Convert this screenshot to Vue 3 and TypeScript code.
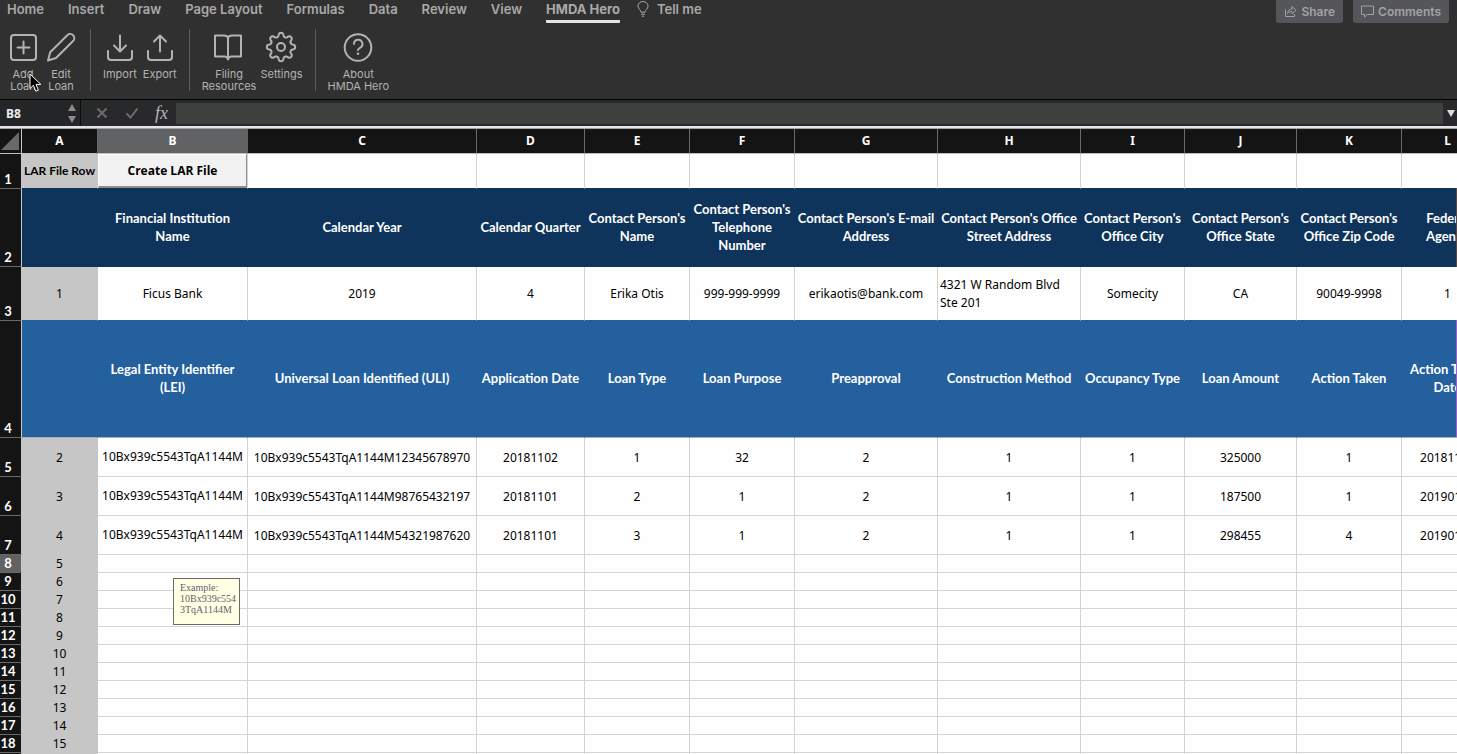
<script setup lang="ts">
interface Column {
  letter: string
  width: number
}

interface SheetRow {
  n: number
  kind: 'top' | 'navy' | 'contact' | 'blue' | 'loan' | 'empty'
  cells: string[]
}

const tabs: string[] = ['Home', 'Insert', 'Draw', 'Page Layout', 'Formulas', 'Data', 'Review', 'View', 'HMDA Hero']
const activeTab = 'HMDA Hero'

const columns: Column[] = [
  { letter: 'A', width: 76 },
  { letter: 'B', width: 150 },
  { letter: 'C', width: 229 },
  { letter: 'D', width: 108 },
  { letter: 'E', width: 105 },
  { letter: 'F', width: 105 },
  { letter: 'G', width: 143 },
  { letter: 'H', width: 143 },
  { letter: 'I', width: 104 },
  { letter: 'J', width: 112 },
  { letter: 'K', width: 105 },
  { letter: 'L', width: 92 },
]

const blanks = (count: number): string[] => Array.from({ length: count }, () => '')

// Eight rounded teeth around the centre of a 32-unit box.
const gearPoints: string = Array.from({ length: 144 }, (_, i) => {
  const angle = (i / 144) * Math.PI * 2
  const wave = Math.cos(angle * 8)
  const radius = 12.3 + 2 * Math.tanh(wave * 1.6)
  return `${(16 + radius * Math.sin(angle)).toFixed(2)},${(16 - radius * Math.cos(angle)).toFixed(2)}`
}).join(' ')

const rows: SheetRow[] = [
  { n: 1, kind: 'top', cells: ['LAR File Row', ...blanks(11)] },
  {
    n: 2,
    kind: 'navy',
    cells: [
      '',
      'Financial Institution\nName',
      'Calendar Year',
      'Calendar Quarter',
      "Contact Person's\nName",
      "Contact Person's\nTelephone\nNumber",
      "Contact Person's E-mail\nAddress",
      "Contact Person's Office\nStreet Address",
      "Contact Person's\nOffice City",
      "Contact Person's\nOffice State",
      "Contact Person's\nOffice Zip Code",
      'Federal\nAgency',
    ],
  },
  {
    n: 3,
    kind: 'contact',
    cells: ['1', 'Ficus Bank', '2019', '4', 'Erika Otis', '999-999-9999', 'erikaotis@bank.com', '4321 W Random Blvd\nSte 201', 'Somecity', 'CA', '90049-9998', '1'],
  },
  {
    n: 4,
    kind: 'blue',
    cells: [
      '',
      'Legal Entity Identifier\n(LEI)',
      'Universal Loan Identified (ULI)',
      'Application Date',
      'Loan Type',
      'Loan Purpose',
      'Preapproval',
      'Construction Method',
      'Occupancy Type',
      'Loan Amount',
      'Action Taken',
      'Action Taken\nDate',
    ],
  },
  { n: 5, kind: 'loan', cells: ['2', '10Bx939c5543TqA1144M', '10Bx939c5543TqA1144M12345678970', '20181102', '1', '32', '2', '1', '1', '325000', '1', '20181120'] },
  { n: 6, kind: 'loan', cells: ['3', '10Bx939c5543TqA1144M', '10Bx939c5543TqA1144M98765432197', '20181101', '2', '1', '2', '1', '1', '187500', '1', '20190110'] },
  { n: 7, kind: 'loan', cells: ['4', '10Bx939c5543TqA1144M', '10Bx939c5543TqA1144M54321987620', '20181101', '3', '1', '2', '1', '1', '298455', '4', '20190110'] },
  ...Array.from({ length: 12 }, (_, i): SheetRow => ({ n: i + 8, kind: 'empty', cells: [String(i + 5), ...blanks(11)] })),
]
</script>

<template>
  <div class="app">
    <header class="ribbon">
      <nav class="tabs">
        <button v-for="t in tabs" :key="t" type="button" class="tab" :class="{ active: t === activeTab }">{{ t }}</button>
        <button type="button" class="tab tell">
          <svg width="12" height="16" viewBox="0 0 12 16" fill="none" stroke="currentColor">
            <path d="M4 11.2C4 9 1 8 1 5.2a5 4.7 0 0 1 10 0C11 8 8 9 8 11.2z" />
            <path d="M4 13.2h4M4.8 15.2h2.4" />
          </svg>
          Tell me
        </button>
        <div class="actions">
          <button type="button" class="action">
            <svg width="13" height="13" viewBox="0 0 13 13" fill="none" stroke="currentColor">
              <path d="M1.500 4.500v7h9V9" />
              <path d="M3.500 8.500C4 5.500 5.500 4 8 4V1.500l4 3.700L8 9V6.500C6 6.500 4.800 7 3.500 8.500z" />
            </svg>
            Share
          </button>
          <button type="button" class="action">
            <svg width="13" height="13" viewBox="0 0 13 13" fill="none" stroke="currentColor">
              <path d="M.5 1h12v8.500H6.200L3.500 12V9.500h-3z" />
            </svg>
            Comments
          </button>
        </div>
      </nav>

      <div class="tools">
        <div class="group first">
          <button type="button" class="tool">
            <svg width="32" height="32" viewBox="0 0 32 32">
              <rect x="4" y="4" width="25" height="25" rx="3" />
              <path d="M16.500 10.500v12M10.500 16.500h12" />
            </svg>
            <span>Add<br />Loan</span>
          </button>
          <button type="button" class="tool">
            <svg width="32" height="32" viewBox="0 0 32 32">
              <path d="M3 29.500l2.200-8.300L22.300 4.200a4 4 0 0 1 5.800 5.800L11 27z" />
            </svg>
            <span>Edit<br />Loan</span>
          </button>
        </div>
        <div class="group transfer">
          <button type="button" class="tool">
            <svg width="32" height="32" viewBox="0 0 32 32">
              <path d="M4 20v6a3 3 0 0 0 3 3h18a3 3 0 0 0 3-3v-6M16 4.500v16M10 14.500l6 6 6-6" />
            </svg>
            <span>Import</span>
          </button>
          <button type="button" class="tool">
            <svg width="32" height="32" viewBox="0 0 32 32">
              <path d="M4 20v6a3 3 0 0 0 3 3h18a3 3 0 0 0 3-3v-6M16 20.500V4.500M10 10.500l6-6 6 6" />
            </svg>
            <span>Export</span>
          </button>
        </div>
        <div class="group">
          <button type="button" class="tool">
            <svg width="32" height="32" viewBox="0 0 32 32">
              <path d="M2 4.500h8.500c2.500 0 4.500 1 4.500 3v21c-.5-2-1.500-3-3.500-3H2zM28 4.500h-8.500c-2.500 0-4.500 1-4.500 3v21c.5-2 1.500-3 3.500-3H28z" />
            </svg>
            <span>Filing<br />Resources</span>
          </button>
          <button type="button" class="tool settings">
            <svg width="32" height="32" viewBox="0 0 32 32">
              <circle cx="16" cy="16" r="4" />
              <polygon :points="gearPoints" />
            </svg>
            <span>Settings</span>
          </button>
        </div>
        <div class="group">
          <button type="button" class="tool">
            <svg width="32" height="32" viewBox="0 0 32 32">
              <circle cx="16" cy="16.500" r="13.300" />
              <path d="M12 13a4.200 4.200 0 1 1 6.300 3.600c-1.600.9-2.300 1.200-2.300 2.400" />
              <circle class="dot" cx="16" cy="22.800" r="1.300" />
            </svg>
            <span>About<br />HMDA Hero</span>
          </button>
        </div>
      </div>
    </header>

    <div class="formula-bar">
      <div class="name-box">
        <input type="text" value="B8" aria-label="Name box" />
        <div class="stepper">
          <button type="button" aria-label="Previous">
            <svg width="8" height="7" viewBox="0 0 8 7"><path d="M4 0l4 7H0z" /></svg>
          </button>
          <button type="button" aria-label="Next">
            <svg width="8" height="7" viewBox="0 0 8 7"><path d="M4 7L0 0h8z" /></svg>
          </button>
        </div>
      </div>
      <div class="entry">
        <button type="button" aria-label="Cancel">
          <svg width="14" height="14" viewBox="0 0 14 14"><path d="M2.500 2.500l9 9M11.500 2.500l-9 9" /></svg>
        </button>
        <button type="button" aria-label="Enter">
          <svg width="14" height="14" viewBox="0 0 14 14"><path d="M1.500 7.500l4 4 7-9" /></svg>
        </button>
        <button type="button" class="fx" aria-label="Insert function"><i>fx</i></button>
      </div>
      <input type="text" class="formula" aria-label="Formula" />
      <button type="button" class="expand" aria-label="Expand formula bar">
        <svg width="8" height="7" viewBox="0 0 8 7"><path d="M4 7L0 0h8z" /></svg>
      </button>
    </div>

    <main class="sheet">
      <table>
        <colgroup>
          <col class="row-head-col" />
          <col v-for="c in columns" :key="c.letter" :style="{ width: c.width + 'px' }" />
        </colgroup>
        <thead>
          <tr>
            <th class="corner"><svg width="18" height="18" viewBox="0 0 18 18"><path d="M18 0v18H0z" /></svg></th>
            <th v-for="c in columns" :key="c.letter" scope="col" :class="{ current: c.letter === 'B' }">{{ c.letter }}</th>
          </tr>
        </thead>
        <tbody>
          <tr v-for="r in rows" :key="r.n" :class="r.kind">
            <th scope="row" :class="{ current: r.n === 8 }">{{ r.n }}</th>
            <td v-for="(cell, i) in r.cells" :key="i" :class="{ index: i === 0, lei: i === 1, address: r.kind === 'contact' && i === 7 }">
              <button v-if="r.n === 1 && i === 1" type="button" class="create">Create LAR File</button>
              <template v-else>{{ cell }}</template>
            </td>
          </tr>
        </tbody>
      </table>
      <div class="note">Example:<br />10Bx939c554<br />3TqA1144M</div>
      <div class="edge brown"></div>
      <div class="edge purple"></div>
    </main>

    <svg class="pointer" width="14" height="20" viewBox="0 0 14 20">
      <path d="M1 1v14.500l3.400-3.200 2.400 5.900 2.600-1.100-2.400-5.700h4.800z" />
    </svg>
  </div>
</template>

<style>
html,
body {
  height: 100%;
  overflow: hidden;
}
</style>

<style scoped>
.app {
  position: relative;
  display: flex;
  flex-direction: column;
  height: 100vh;
  overflow: hidden;
  background: #303030;
  font-family: Inter, 'Liberation Sans', sans-serif;
}
button {
  margin: 0;
  padding: 0;
  border: 0;
  background: none;
  color: inherit;
  font: inherit;
}
input {
  border: 0;
  margin: 0;
  outline: 0;
}
svg {
  display: block;
  flex: none;
}

.ribbon {
  flex: none;
  border-bottom: 1px solid #000;
  color: #a9a9a9;
}
.tabs {
  display: flex;
  align-items: flex-start;
  gap: 24px;
  height: 28px;
  padding-left: 7px;
}
.tab {
  height: 23px;
  padding-bottom: 5px;
  font-size: 13px;
  font-weight: 600;
  line-height: 18px;
  white-space: nowrap;
}
.tab.active {
  padding-bottom: 2px;
  border-bottom: 3px solid #e6e2e6;
  border-radius: 1px;
  font-weight: 700;
}
.tell {
  display: flex;
  align-items: center;
  gap: 8px;
  margin-left: -7px;
}
.actions {
  display: flex;
  gap: 10px;
  margin-left: auto;
  padding-right: 8px;
}
.action {
  display: flex;
  align-items: center;
  gap: 4px;
  height: 23px;
  padding: 0 8px;
  border-radius: 0 0 3px 3px;
  background: #55565a;
  color: #a2a2a4;
  font-size: 12px;
  font-weight: 600;
}

.tools {
  display: flex;
  height: 71px;
}
.group {
  display: flex;
  height: 62px;
  margin-top: 1px;
  padding: 0 12px;
  border-left: 1px solid #5c5c5c;
}
.group.first {
  gap: 6px;
  padding: 0 13px 0 7px;
  border-left: 0;
}
.group.transfer {
  gap: 6px;
}
.tool {
  display: flex;
  flex-direction: column;
  align-items: center;
  gap: 5px;
  min-width: 32px;
  padding-top: 2px;
  color: #b3b3b3;
  font-size: 11px;
  line-height: 12px;
  text-align: center;
}
.tool svg {
  fill: none;
  stroke: #b3b3b3;
  stroke-width: 2;
  stroke-linecap: round;
  stroke-linejoin: round;
}
.tool .dot {
  fill: #b3b3b3;
  stroke: none;
}
.settings {
  margin-left: 4px;
}

.formula-bar {
  display: flex;
  flex: none;
  align-items: center;
  height: 26px;
  border-bottom: 2px solid #e6e4e8;
  background: #28292b;
}
.name-box {
  display: flex;
  align-items: center;
  justify-content: space-between;
  width: 81px;
  height: 26px;
  padding: 0 4px 0 6px;
  border-right: 1px solid #0c0c0c;
  box-sizing: border-box;
  background: #242527;
}
.name-box input {
  width: 50px;
  padding: 0;
  background: none;
  color: #eee;
  font: 700 12px 'Noto Sans', sans-serif;
}
.stepper {
  display: flex;
  flex-direction: column;
  gap: 5px;
}
.stepper svg {
  fill: #8b8b8b;
}
.entry {
  display: flex;
  align-items: center;
  gap: 16px;
  padding: 0 8px 0 14px;
}
.entry svg {
  fill: none;
  stroke: #6d6d6d;
  stroke-width: 2;
}
.fx {
  color: #b5b5b5;
  font: 18px/20px 'Liberation Serif', serif;
}
.formula {
  flex: 1;
  height: 19px;
  min-width: 0;
  background: #3f413f;
  color: #eee;
}
.expand {
  padding: 0 2px 0 4px;
}
.expand svg {
  fill: #dedede;
}

.sheet {
  position: relative;
  flex: 1;
  min-height: 0;
  overflow: hidden;
  border-top: 1px solid #a3a1a5;
  background: #fefefe;
  font-family: 'Noto Sans', 'Open Sans', sans-serif;
}
table {
  width: 1494px;
  border-spacing: 0;
  table-layout: fixed;
  color: #000;
  font-size: 12px;
  line-height: 18px;
}
.row-head-col {
  width: 22px;
}
th,
td {
  box-sizing: border-box;
  padding: 0;
  border-right: 1px solid #d4d4d4;
  border-bottom: 1px solid #d4d4d4;
  text-align: center;
  vertical-align: middle;
  white-space: pre;
}
th {
  border-color: #6a6a6a;
  background: #141414;
  color: #fff;
  font-size: 12px;
  font-weight: 700;
}
thead th {
  height: 25px;
  border-bottom-color: #bdbdbd;
}
tbody th {
  padding-right: 5px;
  border-right-color: #c9c9c9;
  font-family: Lato, sans-serif;
  font-size: 13px;
  line-height: 17px;
  vertical-align: bottom;
}
th.current {
  background: #616263;
}
thead th.current {
  border-right-color: #616263;
}
.corner {
  padding-left: 1px;
  border-right-color: #c9c9c9;
}
.corner svg {
  fill: #68696b;
}
td.index {
  border-color: #c6c6c6;
  background: #c6c6c6;
}
.top {
  height: 35px;
}
.top td {
  border-bottom-color: #0f345b;
}
.top .index {
  font-family: Lato, sans-serif;
  font-weight: 700;
}
.navy {
  height: 78px;
}
.navy td,
.blue td {
  padding-bottom: 2px;
  color: #fff;
  font-family: Lato, sans-serif;
  font-size: 13px;
  font-weight: 700;
}
.navy td {
  border-color: #0f345b;
  background: #0f345b;
}
.contact {
  height: 54px;
}
.contact td {
  border-bottom-color: #245f9e;
}
.contact td.address {
  padding-left: 2px;
  text-align: left;
}
.blue {
  height: 117px;
}
.blue td {
  border-color: #245f9e;
  border-bottom-color: #a9b0b8;
  background: #245f9e;
}
.loan {
  height: 39px;
}
.loan td {
  padding-top: 2px;
}
.loan td.lei {
  padding-top: 0;
}
.empty {
  height: 18px;
}
.empty td,
.empty th {
  line-height: 17px;
}
.create {
  display: block;
  width: 100%;
  height: 34px;
  border: 1px solid #fff;
  border-right-color: #8d8d8d;
  border-bottom: 2px solid #8f9088;
  background: #f2f2f2;
  color: #000;
  font: 700 12px 'Open Sans', sans-serif;
}
.note {
  position: absolute;
  top: 449px;
  left: 173px;
  width: 67px;
  height: 47px;
  box-sizing: border-box;
  padding: 3px 0 0 6px;
  border: 1px solid #6a6a6a;
  background: #ffffe4;
  color: #62626c;
  font: 10px/11px 'Liberation Serif', serif;
}
.edge {
  position: absolute;
  right: 0;
  width: 1px;
}
.edge.brown {
  top: 59px;
  height: 79px;
  background: #574a45;
}
.edge.purple {
  top: 191px;
  height: 117px;
  background: #9a62c4;
}
.pointer {
  position: absolute;
  top: 73px;
  left: 29px;
  fill: #000;
  stroke: #fff;
  stroke-width: 1;
}
</style>
